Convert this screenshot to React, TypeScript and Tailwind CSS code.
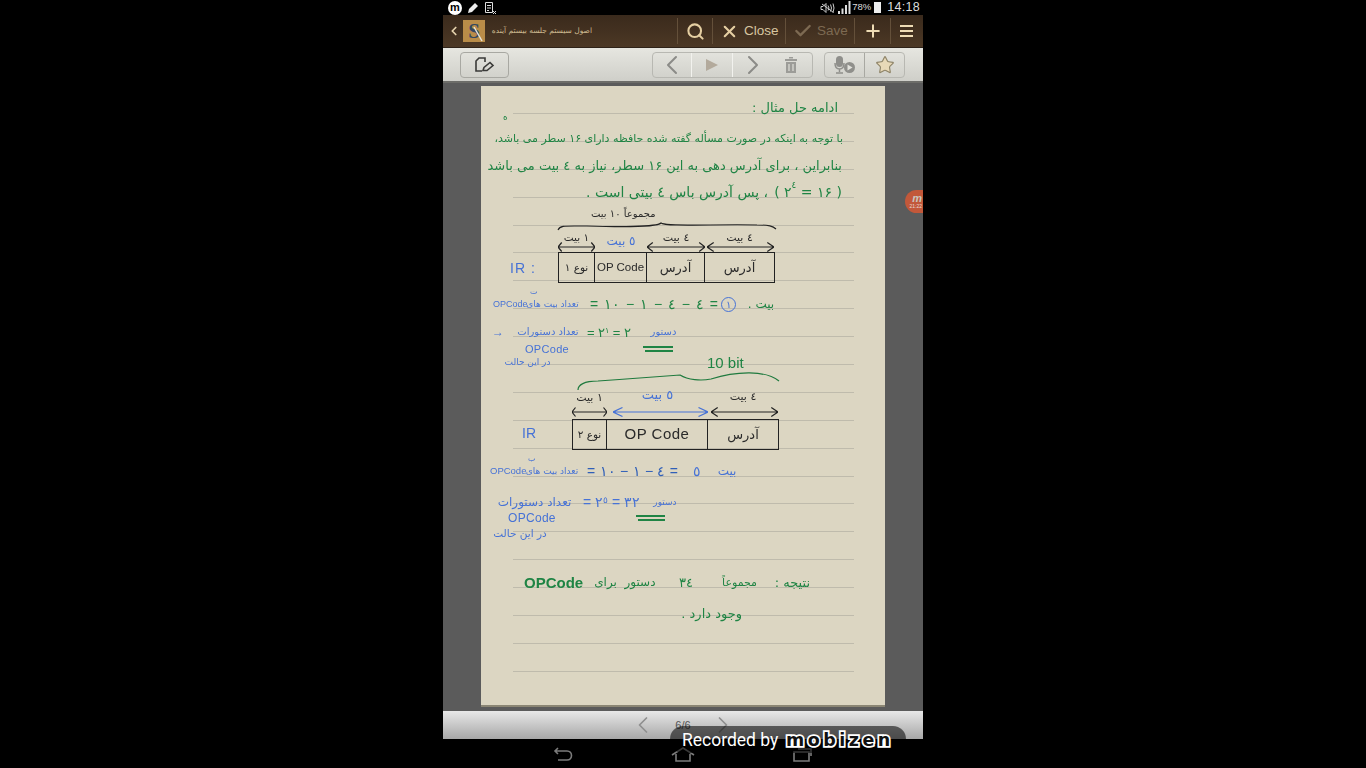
import React from "react";
import { Search, X, Check, Plus, ChevronLeft, ChevronRight, Star } from "lucide-react";

const green = "text-[#1f8444]";
const blue = "text-[#4672d6]";
const ink = "text-[#2a2a2a]";

const Note = ({ className, children }: { className: string; children: React.ReactNode }) => (
  <span dir="rtl" className={`block shrink-0 text-center whitespace-nowrap leading-none font-['DejaVu_Sans',sans-serif] ${className}`}>
    {children}
  </span>
);

const Code = ({ className, children }: { className: string; children: React.ReactNode }) => (
  <span className={`block shrink-0 whitespace-nowrap leading-none font-['Liberation_Sans',sans-serif] ${className}`}>
    {children}
  </span>
);

const Arrow = ({ color }: { color: string }) => (
  <svg className="block w-full h-[10px]" viewBox="0 0 100 10" preserveAspectRatio="none" fill="none" stroke={color} strokeWidth="1.2">
    <path vectorEffect="non-scaling-stroke" d="M0 5H100M10 0.5L0 5L10 9.5M90 0.5L100 5L90 9.5" />
  </svg>
);

const DoubleRule = ({ className }: { className: string }) => (
  <div className={`flex flex-col gap-[2px] ${className}`}>
    <div className="h-[2px] bg-[#1f8444]"></div>
    <div className="h-[2px] ml-[2px] bg-[#1f8444]"></div>
  </div>
);

const StatusBar = () => (
  <div className="h-[15px] flex items-center justify-between pl-[5px] pr-[3px] bg-black">
    <div className="flex items-center gap-[5px]">
      <div className="w-[14px] h-[14px] rounded-full bg-white text-black text-[11px] leading-[13px] font-bold text-center font-['Liberation_Sans',sans-serif]">m</div>
      <svg width="12" height="12" viewBox="0 0 12 12"><path d="M1 11l1-4 6-6 3 3-6 6z" fill="#eee" /></svg>
      <svg width="13" height="14" viewBox="0 0 13 14" fill="none" stroke="#ddd"><path d="M1.5 1.5h7v10h-7zM3 4.500h4M3 7h4M3 9.500h2" /><path d="M9 10l3 3M12 10l-3 3" /></svg>
    </div>
    <div className="flex items-center text-[#ddd] font-['Liberation_Sans',sans-serif]">
      <svg width="15" height="12" viewBox="0 0 15 12" fill="none" stroke="#ccc"><path d="M1 4.500h2l3-3v9l-3-3H1zM8 3.500l1 2.500-1 2.500M10.500 2.500l1 3.500-1 3.500M13 1.500l1 4.500-1 4.500M13.500 10.500L2 2" /></svg>
      <svg className="ml-[2px]" width="14" height="13" viewBox="0 0 14 13" fill="#ddd"><path d="M1 13h2v-3H1zM4.500 13h2V7.500h-2zM8 13h2V4H8zM11.500 13h2V0h-2z" /></svg>
      <span className="text-[9.500px] ml-[1px]">78%</span>
      <div className="w-[7px] h-[11px] bg-[#eee] ml-[3px]"></div>
      <span className="text-[12.500px] tracking-[0.3px] ml-[6px]">14:18</span>
    </div>
  </div>
);

const TitleBar = () => (
  <div className="h-[33px] flex items-center bg-gradient-to-b from-[#3a2a1c] to-[#4c3825] border-b border-[#2e2218] font-['Liberation_Sans',sans-serif]">
    <ChevronLeft size={14} strokeWidth={3} className="text-[#e6d3ad] ml-[4px]" />
    <div className="relative w-[22px] h-[22px] ml-[2px] bg-[#b98c48] text-[#33475f] text-[21px] leading-[22px] font-bold text-center font-['Liberation_Serif',serif]">
      S
      <svg className="absolute inset-0" width="22" height="22" viewBox="0 0 22 22"><path d="M11 7l8 14" stroke="#e8e4da" strokeWidth="1.500" /></svg>
    </div>
    <span dir="rtl" className="w-[101px] ml-[6px] text-[7.500px] whitespace-nowrap text-[#cdb98f] font-['DejaVu_Sans',sans-serif]">اصول سیستم جلسه بیستم آینده</span>
    <div className="flex-1"></div>
    <div className="w-[35px] h-[26px] border-l border-[#64503a] flex items-center justify-center text-[#e5cfa2]">
      <Search size={19} strokeWidth={2.6} />
    </div>
    <div className="w-[73px] h-[26px] border-l border-[#64503a] flex items-center pl-[7px] text-[#e5cfa2]">
      <X size={19} strokeWidth={2.6} />
      <span className="ml-[5px] text-[13.500px] text-[#d8c6a0]">Close</span>
    </div>
    <div className="w-[69px] h-[26px] border-l border-[#64503a] flex items-center pl-[7px] text-[#7d6a52]">
      <Check size={20} strokeWidth={2.8} />
      <span className="ml-[4px] text-[13.500px]">Save</span>
    </div>
    <div className="w-[36px] h-[26px] border-l border-[#64503a] flex items-center justify-center text-[#eedcb5]">
      <Plus size={20} strokeWidth={2.4} />
    </div>
    <div className="w-[33px] h-[26px] border-l border-[#64503a] flex flex-col items-center justify-center gap-[3px] pr-[1px]">
      <div className="w-[13px] h-[2px] bg-[#eedcb5]"></div>
      <div className="w-[13px] h-[2px] bg-[#eedcb5]"></div>
      <div className="w-[13px] h-[2px] bg-[#eedcb5]"></div>
    </div>
  </div>
);

const ToolBar = () => (
  <div className="h-[35px] flex items-center bg-gradient-to-b from-[#e6e6e0] to-[#cfcfc9] border-b-2 border-[#6d6d69] pl-[17px]">
    <div className="w-[49px] h-[26px] rounded-[4px] border border-[#a8a8a2] flex items-center justify-center">
      <svg width="21" height="18" viewBox="0 0 21 18" fill="none" stroke="#3a3a38" strokeWidth="1.600">
        <path d="M8 15H2V5l3-3h6v4" />
        <path d="M9 14.500l1-3 6-5 3 3-6 5z" />
      </svg>
    </div>
    <div className="ml-[143px] w-[161px] h-[26px] rounded-[4px] border border-[#b8b8b2] flex items-stretch text-[#8b8b87]">
      <div className="w-[39px] flex items-center justify-center border-r border-[#f2f2ee]"><ChevronLeft size={32} strokeWidth={1.5} /></div>
      <div className="w-[41px] flex items-center justify-center border-r border-[#f2f2ee]">
        <svg width="14" height="14" viewBox="0 0 14 14"><path d="M1 1l12 6-12 6z" fill="#b3aa9c" /></svg>
      </div>
      <div className="w-[40px] flex items-center justify-center"><ChevronRight size={32} strokeWidth={1.5} /></div>
      <div className="flex-1 flex items-center justify-center pr-[4px]">
        <svg width="14" height="16" viewBox="0 0 14 16" fill="#9c9c98"><path d="M1 2h12v2H1zM5 0h4v1.500H5zM2 5h10v11H2z" /><path d="M5 7v7M9 7v7" stroke="#dadad4" strokeWidth="1.300" /></svg>
      </div>
    </div>
    <div className="ml-[11px] w-[81px] h-[26px] rounded-[4px] border border-[#b8b8b2] flex items-stretch">
      <div className="w-[40px] flex items-center justify-center border-r border-[#a8a8a2]">
        <svg width="22" height="19" viewBox="0 0 22 19">
          <rect x="2" y="1" width="7" height="11" rx="3.500" fill="#8f8f8b" />
          <path d="M1 8c0 4 2 6 4.500 6S10 12 10 8M5.500 14v3M2 18h7" fill="none" stroke="#8f8f8b" strokeWidth="1.500" />
          <circle cx="15.500" cy="12.500" r="5.500" fill="#8f8f8b" />
          <path d="M13.500 9.500l5 3-5 3z" fill="#e2e2dc" />
        </svg>
      </div>
      <div className="flex-1 flex items-center justify-center">
        <Star size={20} strokeWidth={1.400} className="text-[#8e8468] fill-[#e8d9b8]" />
      </div>
    </div>
  </div>
);

const cell = "h-full flex items-center justify-center whitespace-nowrap";

const Paper = () => (
  <div className="relative w-[404px] h-[621px] bg-[#dcd6c2] border-b-2 border-[#8b8674] pt-[4px] flex flex-col blur-[0.3px]">
    {/* ruled lines behind the writing */}
    <div className="absolute inset-x-0 top-[27px] pl-[32px] pr-[31px] flex flex-col gap-[26.900px]">
      {Array.from({ length: 21 }).map((_, i) => (
        <div key={i} className="h-[1px] bg-[#bfbbac]"></div>
      ))}
    </div>

    <div className="relative flex flex-col">
      {/* intro lines */}
      <div className="h-[34px] flex items-center justify-end pr-[47px]">
        <Note className={`text-[13px] ${green}`}>ادامه حل مثال :</Note>
      </div>
      <div className="relative h-[28px] flex items-center justify-end pr-[42px]">
        <Note className={`text-[11px] ${green}`}>با توجه به اینکه در صورت مسأله گفته شده حافظه دارای ۱۶ سطر می باشد،</Note>
        <Note className={`absolute left-[22px] -top-[11px] text-[9px] ${green}`}>ه</Note>
      </div>
      <div className="h-[26px] flex items-center justify-end pr-[43px]">
        <Note className={`text-[13px] ${green}`}>بنابراین ، برای آدرس دهی به این ۱۶ سطر، نیاز به ٤ بیت می باشد</Note>
      </div>
      <div className={`h-[28px] flex items-center justify-end gap-[6px] pr-[43px] ${green}`}>
        <Note className="text-[14px]">، پس آدرس باس ٤ بیتی است .</Note>
        <div className="flex items-start text-[14px] leading-none font-['DejaVu_Sans',sans-serif]">
          <span>(&nbsp;۲</span>
          <span className="text-[9px] -mt-[4px]">٤</span>
          <span>&nbsp;=&nbsp;۱۶&nbsp;)</span>
        </div>
      </div>

      {/* first instruction format */}
      <div className="h-[16px] flex items-center pl-[110px]">
        <Note className={`text-[10px] ${ink}`}>مجموعاً ۱۰ بیت</Note>
      </div>
      <div className="h-[10px] pl-[76px]">
        <svg className="block overflow-visible" width="220" height="10" viewBox="0 0 220 10" fill="none" stroke="#222" strokeWidth="1.100">
          <path d="M1 8C3 3 8 4 30 4C60 5 100 5 104 1C108 5 160 2 200 3C212 3 216 4 219 7" />
        </svg>
      </div>
      <div className="h-[10px] ml-[77px] w-[216px] grid grid-cols-[37px_52px_58px_69px] items-start">
        <Note className={`text-[10.500px] ${ink}`}>۱ بیت</Note>
        <Note className={`text-[12px] pt-[3px] ${blue}`}>٥ بیت</Note>
        <Note className={`text-[11px] ${ink}`}>٤ بیت</Note>
        <Note className={`text-[11px] ${ink}`}>٤ بیت</Note>
      </div>
      <div className="h-[10px] ml-[77px] w-[216px] grid grid-cols-[37px_52px_58px_69px]">
        <Arrow color="#222" />
        <div></div>
        <Arrow color="#222" />
        <div className="pl-[2px]"><Arrow color="#222" /></div>
      </div>
      <div className="flex items-center pl-[29px]">
        <Code className={`w-[48px] text-[14px] tracking-[1px] ${blue}`}>IR :</Code>
        <div className={`w-[217px] h-[31px] border-[1.500px] border-[#222] grid grid-cols-[36px_52px_58px_1fr] ${ink}`}>
          <div dir="rtl" className={`${cell} border-r-[1.500px] border-[#222] text-[10.500px] font-['DejaVu_Sans',sans-serif]`}>نوع ۱</div>
          <div className={`${cell} border-r-[1.500px] border-[#222] text-[11.500px] font-['Liberation_Sans',sans-serif]`}>OP Code</div>
          <div dir="rtl" className={`${cell} border-r-[1.500px] border-[#222] text-[13px] font-['DejaVu_Sans',sans-serif]`}>آدرس</div>
          <div dir="rtl" className={`${cell} text-[13px] font-['DejaVu_Sans',sans-serif]`}>آدرس</div>
        </div>
      </div>

      {/* first sum */}
      <div className="relative mt-[11px] h-[20px] flex items-center pl-[12px]">
        <Code className={`w-[33px] text-[9px] ${blue}`}>OPCode</Code>
        <Note className={`w-[53px] text-[9px] ${blue}`}>تعداد بیت های</Note>
        <Code className={`ml-[11px] w-[131px] text-[14px] [word-spacing:2px] ${green}`}>= ۱۰ − ۱ − ٤ − ٤ =</Code>
        <div className={`w-[15px] h-[15px] shrink-0 rounded-full border border-[#4672d6] flex items-center justify-center text-[10px] leading-none ${blue}`}>۱</div>
        <Note className={`ml-[10px] w-[30px] text-[12px] ${green}`}>بیت .</Note>
        <Note className={`absolute left-[49px] -top-[6px] text-[8px] ${blue}`}>ت</Note>
      </div>
      <div className="mt-[8px] h-[20px] flex items-center pl-[11px]">
        <Code className={`w-[25px] text-[12px] ${blue}`}>→</Code>
        <Note className={`w-[62px] text-[10px] ${blue}`}>تعداد دستورات</Note>
        <Code className={`ml-[8px] w-[58px] text-[13px] ${green}`}>= ۲<sup className="text-[8px]">۱</sup> = ۲</Code>
        <Note className={`ml-[5px] w-[27px] text-[10px] ${blue}`}>دستور</Note>
      </div>
      <div className="h-[14px] flex items-center pl-[44px]">
        <Code className={`w-[44px] text-[11px] tracking-[0.3px] ${blue}`}>OPCode</Code>
        <DoubleRule className="ml-[74px] w-[30px]" />
      </div>
      <div className="h-[12px] flex items-center pl-[23px]">
        <Note className={`w-[47px] text-[9px] ${blue}`}>در این حالت</Note>
        <Code className={`ml-[156px] text-[15px] ${green}`}>10 bit</Code>
      </div>

      {/* second instruction format */}
      <div className="mt-[3px] h-[17px] pl-[95px]">
        <svg className="block overflow-visible" width="204" height="17" viewBox="0 0 204 17" fill="none" stroke="#1f7a3e" strokeWidth="1.200">
          <path d="M2 19C2 14 8 10 22 10C50 8 80 6 104 4C112 9 125 10 135 8C160 0 190 -1 203 10" />
        </svg>
      </div>
      <div className="h-[19px] ml-[91px] w-[206px] grid grid-cols-[35px_101px_70px] items-start">
        <Note className={`text-[11px] pt-[4px] ${ink}`}>۱ بیت</Note>
        <Note className={`text-[13px] ${blue}`}>٥ بیت</Note>
        <Note className={`text-[11px] pt-[3px] ${ink}`}>٤ بیت</Note>
      </div>
      <div className="h-[10px] ml-[91px] w-[206px] grid grid-cols-[35px_101px_70px]">
        <Arrow color="#222" />
        <div className="pl-[6px]"><Arrow color="#4672d6" /></div>
        <div className="pl-[3px]"><Arrow color="#222" /></div>
      </div>
      <div className="mt-[2px] flex items-center pl-[41px]">
        <Code className={`w-[50px] text-[14px] -mt-[4px] ${blue}`}>IR</Code>
        <div className={`w-[207px] h-[31px] border-[1.500px] border-[#222] grid grid-cols-[34px_101px_1fr] ${ink}`}>
          <div dir="rtl" className={`${cell} border-r-[1.500px] border-[#222] text-[10.500px] font-['DejaVu_Sans',sans-serif]`}>نوع ۲</div>
          <div className={`${cell} border-r-[1.500px] border-[#222] text-[15px] tracking-[0.5px] font-['Liberation_Sans',sans-serif]`}>OP Code</div>
          <div dir="rtl" className={`${cell} text-[13px] font-['DejaVu_Sans',sans-serif]`}>آدرس</div>
        </div>
      </div>

      {/* second sum */}
      <div className="relative mt-[11px] h-[20px] flex items-center pl-[9px]">
        <Code className={`w-[35px] text-[9.500px] ${blue}`}>OPCode</Code>
        <Note className={`w-[54px] text-[9px] ${blue}`}>تعداد بیت های</Note>
        <Code className="ml-[8px] w-[100px] text-[14px] [word-spacing:0.500px] text-[#2f5fb8]">= ۱۰ − ۱ − ٤ =</Code>
        <Code className={`ml-[6px] w-[11px] text-[14px] ${blue}`}>٥</Code>
        <Note className={`ml-[13px] w-[20px] text-[12px] ${blue}`}>بیت</Note>
        <Note className={`absolute left-[47px] -top-[6px] text-[8px] ${blue}`}>ب</Note>
      </div>
      <div className="mt-[11px] h-[20px] flex items-center pl-[15px]">
        <Note className={`w-[77px] text-[12px] ${blue}`}>تعداد دستورات</Note>
        <Code className={`ml-[10px] w-[69px] text-[14px] ${blue}`}>= ۲<sup className="text-[9px]">٥</sup> = ۳۲</Code>
        <Note className={`ml-[1px] w-[24px] text-[9px] ${blue}`}>دستور</Note>
      </div>
      <div className="h-[12px] flex items-center pl-[27px]">
        <Code className={`w-[48px] text-[12px] tracking-[0.3px] ${blue}`}>OPCode</Code>
        <DoubleRule className="ml-[80px] w-[29px]" />
      </div>
      <div className="mt-[2px] h-[14px] flex items-center pl-[11px]">
        <Note className={`w-[56px] text-[10.500px] ${blue}`}>در این حالت</Note>
      </div>

      {/* conclusion */}
      <div className={`mt-[32px] h-[20px] flex items-center pl-[43px] ${green}`}>
        <Code className="w-[58px] text-[15px] font-bold">OPCode</Code>
        <Note className="ml-[11px] w-[25px] text-[12px]">برای</Note>
        <Note className="ml-[5px] w-[34px] text-[12px]">دستور</Note>
        <Note className="ml-[20px] w-[18px] text-[13px]">۳٤</Note>
        <Note className="ml-[30px] w-[32px] text-[11px]">مجموعاً</Note>
        <Note className="ml-[18px] w-[35px] text-[13px]">نتیجه :</Note>
      </div>
      <div className="mt-[11px] h-[20px] flex items-center justify-end pr-[143px]">
        <Note className={`text-[13px] ${green}`}>وجود دارد .</Note>
      </div>
    </div>
  </div>
);

const BottomBar = () => (
  <div className="h-[28px] bg-gradient-to-b from-[#e8e8e8] to-[#a8a8a8] flex items-center justify-center gap-[9px] text-[#8f8f8f]">
    <ChevronLeft size={28} strokeWidth={1.500} />
    <span className="text-[11px] text-[#555] w-[34px] text-center font-['Liberation_Sans',sans-serif]">6/6</span>
    <ChevronRight size={28} strokeWidth={1.500} />
  </div>
);

const NavBar = () => (
  <div className="flex-1 bg-black flex items-start justify-center gap-[98px] pt-[8px] pr-[1px]">
    <svg width="20" height="15" viewBox="0 0 20 15" fill="none" stroke="#7c7c7c" strokeWidth="1.600">
      <path d="M2 4h12c6 0 6 9 0 9H5M5 1L2 4l3 3" />
    </svg>
    <svg width="24" height="15" viewBox="0 0 24 15" fill="none" stroke="#7c7c7c" strokeWidth="1.600">
      <path d="M1 8L12 1l11 7M5 7v7h14V7" />
    </svg>
    <svg width="20" height="15" viewBox="0 0 20 15" fill="none" stroke="#7c7c7c" strokeWidth="1.600">
      <path d="M1 5h15v9H1zM5 2h13v7" />
    </svg>
  </div>
);

export default function App() {
  return (
    <div className="w-screen h-screen bg-black flex justify-center overflow-hidden">
      <div className="relative w-[480px] h-full flex flex-col overflow-hidden">
        <StatusBar />
        <TitleBar />
        <ToolBar />
        <div className="h-[628px] bg-[#5b5b5b] pt-[3px] pl-[38px]">
          <Paper />
        </div>
        <BottomBar />
        <NavBar />

        {/* floating recorder widget on the edge */}
        <div className="absolute right-0 top-[190px] w-[18px] h-[23px] rounded-l-full bg-[#c2583a] flex flex-col items-end justify-center pr-[1px] font-['Liberation_Sans',sans-serif]">
          <span className="text-[11px] leading-[9px] font-bold italic text-[#c9c4bd]">m</span>
          <span className="text-[5px] leading-[6px] text-[#e8d8d0]">21:22</span>
        </div>

        {/* recording watermark */}
        <div className="absolute left-[227px] top-[726px] w-[236px] h-[27px] rounded-[13px] bg-black/55 flex items-center pl-[12px] pt-[1px] text-white">
          <span className="w-[104px] shrink-0 text-[17.500px] whitespace-nowrap font-['Roboto',sans-serif]">Recorded by</span>
          <span className="text-[17.500px] font-bold tracking-[3.500px] whitespace-nowrap text-[#111] [-webkit-text-stroke:3.500px_white] [paint-order:stroke_fill] font-['DejaVu_Sans',sans-serif]">mobizen</span>
        </div>
      </div>
    </div>
  );
}
